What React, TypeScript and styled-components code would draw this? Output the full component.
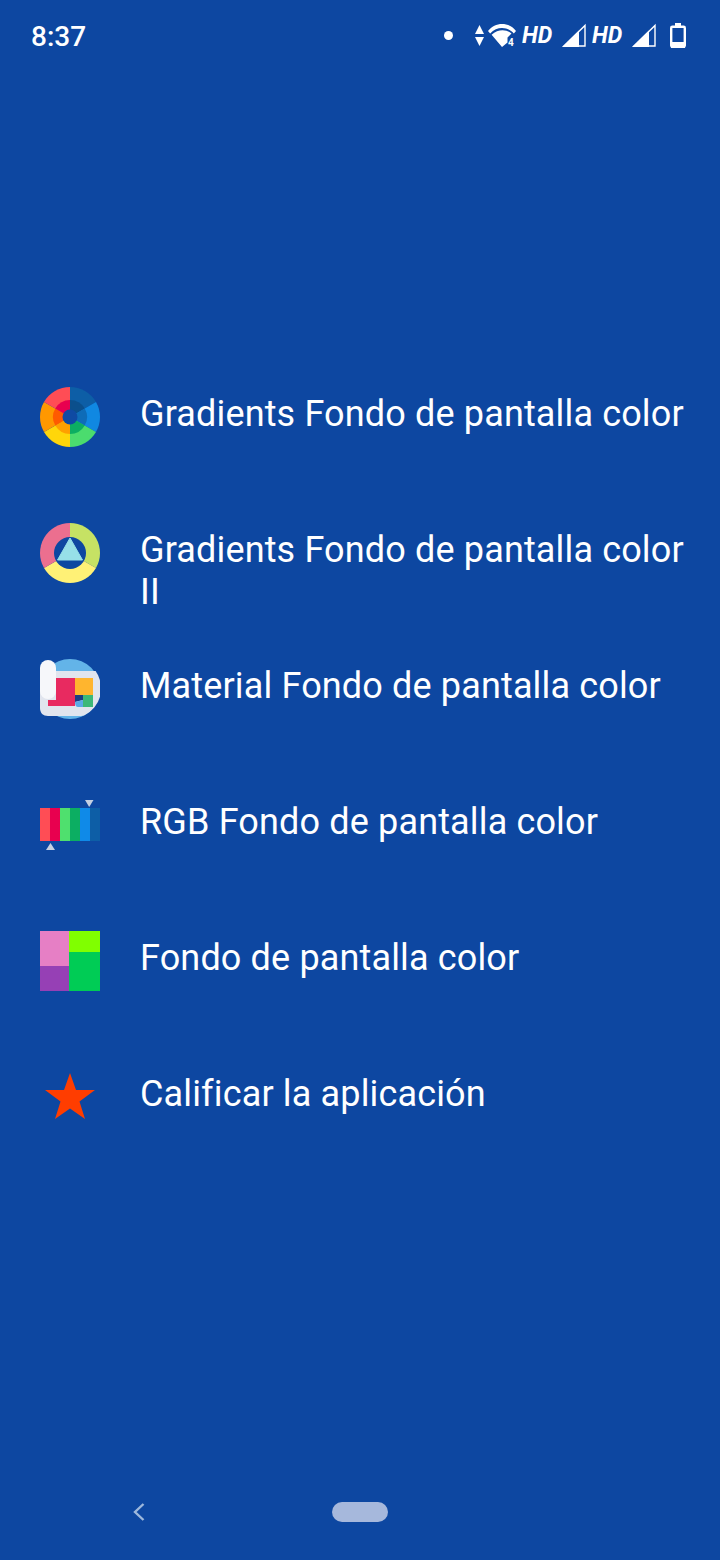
import React from 'react';
import styled, { createGlobalStyle } from 'styled-components';

const GlobalStyle = createGlobalStyle`
  html, body {
    margin: 0;
    padding: 0;
    background: #0d47a1;
  }
`;

// pie slice between two angles, measured clockwise from 12 o'clock
const slice = (r: number, from: number, to: number) => {
  const point = (deg: number) => {
    const a = (deg * Math.PI) / 180;
    return `${(30 + r * Math.sin(a)).toFixed(2)} ${(30 - r * Math.cos(a)).toFixed(2)}`;
  };
  return `M30 30 L${point(from)} A${r} ${r} 0 0 1 ${point(to)} Z`;
};

const OUTER = ['#0d5ea6', '#1088e2', '#4bdc6e', '#ffd60a', '#ff9800', '#ff4d55'];
const INNER = ['#0b4f8c', '#0e6cb8', '#0cae62', '#ffa000', '#ff5a00', '#e8004f'];

const WheelIcon = () => (
  <IconSvg viewBox="0 0 60 60">
    {OUTER.map((c, i) => (
      <path key={c} d={slice(30, i * 60, i * 60 + 60)} fill={c} />
    ))}
    {INNER.map((c, i) => (
      <path key={c} d={slice(17, i * 60, i * 60 + 60)} fill={c} />
    ))}
    <circle cx="30" cy="30" r="7.5" fill="#0f4aa3" />
  </IconSvg>
);

const RingIcon = () => (
  <IconSvg viewBox="0 0 60 60">
    <path d={slice(30, 0, 120)} fill="#c6e264" />
    <path d={slice(30, 120, 240)} fill="#fff176" />
    <path d={slice(30, 240, 360)} fill="#ec6f8f" />
    <circle cx="30" cy="30" r="16" fill="#0d47a1" />
    <path d="M30 15 L42.5 37 H17.5 Z" fill="#97e0e8" stroke="#97e0e8" strokeLinejoin="round" />
  </IconSvg>
);

const MaterialIcon = () => (
  <IconSvg viewBox="0 0 60 60">
    <circle cx="30" cy="30" r="30" fill="#63b4e8" />
    <path
      d="M8 12 H55.6 A30 30 0 0 1 44 56.5 Q41 57 38 57 H8 C3 57 0 54 0 49 V20 Z"
      fill="#e1e5ee"
    />
    <rect x="0" y="1" width="16" height="39" rx="8" fill="#f6f7fa" />
    <path d="M16 19 H35 V47 H8 V41 H16 Z" fill="#e82a60" />
    <rect x="35" y="19" width="18" height="17" fill="#ffb52e" />
    <rect x="43" y="36" width="10" height="12" fill="#3cb878" />
    <path d="M35 36 H43 V41 L35 43 Z" fill="#1c3c82" />
    <path d="M35 43 L43 41 V48 H38 C36 48 35 46 35 43 Z" fill="#5aa9e6" />
  </IconSvg>
);

const STRIPES = ['#ff4d55', '#e8004f', '#4fe06e', '#0cae62', '#0f8ae8', '#0d5ea6'];

const RgbIcon = () => (
  <IconSvg viewBox="0 0 60 60">
    {STRIPES.map((c, i) => (
      <rect key={c} x={i * 10} y="13" width="10" height="33" fill={c} />
    ))}
    <path d="M45 5 H53.5 L49.2 12 Z" fill="#c5d0e2" />
    <path d="M6 55 H15 L10.5 48 Z" fill="#c5d0e2" />
  </IconSvg>
);

const BlocksIcon = () => (
  <IconSvg viewBox="0 0 60 60">
    <rect x="0" y="0" width="29" height="35" fill="#e67fc5" />
    <rect x="0" y="35" width="29" height="25" fill="#9640b5" />
    <rect x="29" y="0" width="31" height="21" fill="#80ff00" />
    <rect x="29" y="21" width="31" height="39" fill="#00cc55" />
  </IconSvg>
);

const StarIcon = () => (
  <IconSvg viewBox="0 0 60 60">
    <path
      d="M30 6 L36 23 H55 L39.5 34.5 L45 52 L30 41.5 L15 52 L20.5 34.5 L5 23 H24 Z"
      fill="#ff3d00"
    />
  </IconSvg>
);

const SignalIcon = () => (
  <svg width="24" height="24" viewBox="0 0 24 24">
    <path d="M23 2.5 V23 H2 Z" fill="none" stroke="#fff" strokeWidth="1.4" />
    <path d="M17 7.5 V24 H0 Z" fill="#fff" />
  </svg>
);

const WifiIcon = () => (
  <svg width="28" height="24" viewBox="0 0 28 24">
    <path d="M0 8 C7 -1.5 21 -1.5 28 8 L25.8 10.4 C19 3.2 9 3.2 2.2 10.4 Z" fill="#fff" />
    <path d="M3.6 11.8 C10 6 18 6 23.5 10.4 L19.5 14.5 V19.5 L14 24 Z" fill="#fff" />
    <Tiny x="20" y="23">4</Tiny>
  </svg>
);

const ArrowsIcon = () => (
  <Arrows width="9" height="21" viewBox="0 0 9 21">
    <path d="M4.5 0 L9 9 H0 Z" fill="#fff" />
    <path d="M0 12 H9 L4.5 21 Z" fill="#fff" />
  </Arrows>
);

const BatteryIcon = () => (
  <Battery width="16" height="25" viewBox="0 0 16 25">
    <path d="M5 0 H11 V3 H5 Z" fill="#fff" />
    <rect x="1.2" y="3.8" width="13.6" height="20" rx="1.2" fill="none" stroke="#fff" strokeWidth="2.4" />
    <rect x="1" y="19" width="14" height="6" fill="#fff" />
  </Battery>
);

const ITEMS = [
  { label: 'Gradients Fondo de pantalla color', icon: <WheelIcon /> },
  { label: 'Gradients Fondo de pantalla color II', icon: <RingIcon /> },
  { label: 'Material Fondo de pantalla color', icon: <MaterialIcon /> },
  { label: 'RGB Fondo de pantalla color', icon: <RgbIcon /> },
  { label: 'Fondo de pantalla color', icon: <BlocksIcon /> },
  { label: 'Calificar la aplicación', icon: <StarIcon /> },
];

export default function App() {
  return (
    <Screen>
      <GlobalStyle />
      <StatusBar>
        <Time>8:37</Time>
        <StatusIcons>
          <Dot />
          <ArrowsIcon />
          <WifiIcon />
          <Hd>HD</Hd>
          <SignalIcon />
          <Hd>HD</Hd>
          <SignalIcon />
          <BatteryIcon />
        </StatusIcons>
      </StatusBar>
      <Menu>
        {ITEMS.map(item => (
          <Row key={item.label}>
            {item.icon}
            <Label>{item.label}</Label>
          </Row>
        ))}
      </Menu>
      <NavBar>
        <svg width="14" height="20" viewBox="0 0 14 20">
          <path d="M11.5 2 L3 10 L11.5 18" fill="none" stroke="#9db8dc" strokeWidth="2.4" />
        </svg>
        <HomePill />
      </NavBar>
    </Screen>
  );
}

const Screen = styled.div`
  display: flex;
  flex-direction: column;
  width: 720px;
  height: 1560px;
  overflow: hidden;
  background: #0d47a1;
  color: #fff;
  font-family: Roboto, "Liberation Sans", sans-serif;
`;

const StatusBar = styled.div`
  display: flex;
  align-items: center;
  justify-content: space-between;
  height: 72px;
  padding: 0 34px 0 31px;
  box-sizing: border-box;
`;

const Time = styled.span`
  font-size: 28px;
  font-weight: 500;
`;

const StatusIcons = styled.div`
  display: flex;
  align-items: center;
  gap: 6px;
  height: 26px;
  margin-bottom: 2px;
`;

const Dot = styled.span`
  width: 9px;
  height: 9px;
  margin-right: 16px;
  border-radius: 50%;
  background: #fff;
`;

const Arrows = styled.svg`
  margin-right: -2px;
`;

const Hd = styled.span`
  width: 28px;
  margin-right: 6px;
  font-size: 23px;
  font-style: italic;
  font-weight: 700;
  white-space: nowrap;
`;

const Battery = styled.svg`
  margin-left: 8px;
`;

const Tiny = styled.text`
  font-family: Roboto, sans-serif;
  font-size: 10px;
  font-weight: 700;
  fill: #fff;
`;

const Menu = styled.div`
  display: flex;
  flex-direction: column;
  margin-top: 315px;
`;

const Row = styled.div`
  display: flex;
  align-items: flex-start;
  gap: 40px;
  height: 136px;
  padding-left: 40px;
`;

const IconSvg = styled.svg`
  flex: none;
  width: 60px;
  height: 60px;
`;

const Label = styled.span`
  width: 550px;
  margin-top: 6px;
  font-size: 36px;
  line-height: 42px;
  letter-spacing: 0.15px;
`;

const NavBar = styled.div`
  display: flex;
  align-items: center;
  gap: 186px;
  margin-top: auto;
  height: 20px;
  padding: 0 0 38px 132px;
`;

const HomePill = styled.span`
  width: 56px;
  height: 20px;
  border-radius: 10px;
  background: #a6b8dc;
`;
